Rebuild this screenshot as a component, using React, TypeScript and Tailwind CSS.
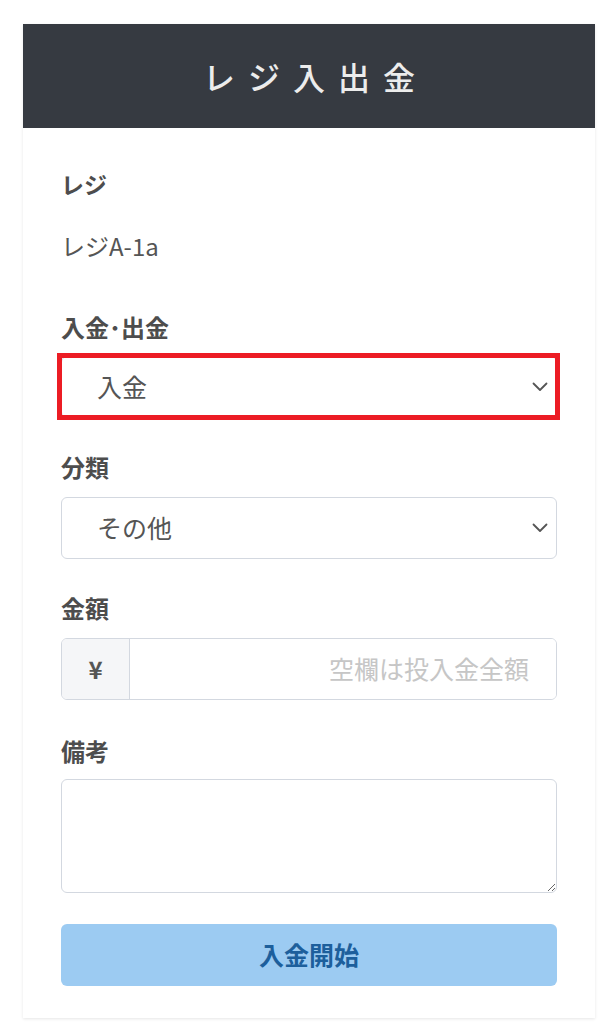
import React from "react";

const Chevron = () => (
  <svg
    className="pointer-events-none absolute right-[9px] top-1/2 -translate-y-1/2"
    width="16"
    height="10"
    viewBox="0 0 16 10"
    fill="none"
  >
    <path d="M1.5 1.5 L8 8 L14.5 1.5" stroke="#555" strokeWidth="1.8" strokeLinecap="round" strokeLinejoin="round" />
  </svg>
);

export default function App() {
  const font = { fontFamily: '"Noto Sans CJK JP", "Noto Sans", sans-serif' };
  return (
    <div className="min-h-[1024px] bg-white pt-[24px]" style={font}>
      <div className="ml-[23px] w-[572px] bg-white shadow-[0_1px_3px_rgba(0,0,0,0.10)]">
        <div className="flex h-[104px] items-center justify-center bg-[#363a41]">
          <h1 className="pl-[13px] text-[32px] font-medium leading-none tracking-[13px] text-[#ececec]">
            レジ入出金
          </h1>
        </div>
        <div className="px-[38px] pt-[40px] pb-[32px] text-[#555]">
          <div className="text-[23px] font-bold leading-[32px] text-[#4d4d4d]">レジ</div>
          <div className="mt-[30px] text-[24px] leading-[32px] text-[#555]">レジA-1a</div>

          <div className="mt-[49px] text-[24px] font-bold leading-[32px] text-[#4d4d4d]">入金･出金</div>
          <div className="relative mt-[13px]">
            <select
              defaultValue="in"
              className="block h-[62px] w-full appearance-none rounded-md border border-[#d3d8e0] bg-white pl-[35px] text-[25px] text-[#555] outline-none"
              style={font}
            >
              <option value="in">入金</option>
              <option value="out">出金</option>
            </select>
            <Chevron />
            <div className="pointer-events-none absolute -top-[3px] -bottom-[2px] -left-[4px] -right-[3px] border-[5px] border-[#ec1c24]" />
          </div>

          <div className="mt-[33px] text-[24px] font-bold leading-[32px] text-[#4d4d4d]">分類</div>
          <div className="relative mt-[14px]">
            <select
              defaultValue="other"
              className="block h-[62px] w-full appearance-none rounded-md border border-[#d3d8e0] bg-white pl-[35px] text-[25px] text-[#555] outline-none"
              style={font}
            >
              <option value="other">その他</option>
            </select>
            <Chevron />
          </div>

          <div className="mt-[33px] text-[24px] font-bold leading-[32px] text-[#4d4d4d]">金額</div>
          <div className="mt-[14px] flex h-[62px] w-full overflow-hidden rounded-md border border-[#d3d8e0]">
            <div className="flex w-[68px] shrink-0 items-center justify-center border-r border-[#d3d8e0] bg-[#f5f6f8] text-[24px] font-bold text-[#555]">
              ¥
            </div>
            <input
              type="text"
              placeholder="空欄は投入金全額"
              className="min-w-0 flex-1 bg-white pr-[27px] text-right text-[25px] text-[#555] outline-none placeholder:text-[#c6c6c6]"
              style={font}
            />
          </div>

          <div className="mt-[35px] text-[24px] font-bold leading-[32px] text-[#4d4d4d]">備考</div>
          <textarea
            className="mt-[12px] block h-[114px] w-full rounded-md border border-[#d3d8e0] bg-white px-3 text-[22px] text-[#555] outline-none"
            style={font}
          />

          <button
            type="button"
            className="mt-[31px] flex h-[62px] w-full items-center justify-center rounded-md bg-[#9ccbf2] text-[25px] font-bold text-[#1d5f9c]"
            style={font}
          >
            入金開始
          </button>
        </div>
      </div>
    </div>
  );
}
